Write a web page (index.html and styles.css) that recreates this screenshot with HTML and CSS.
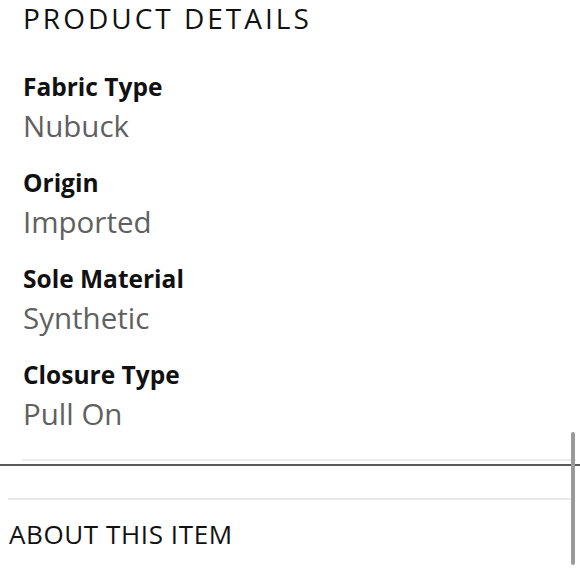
FILE: index.html
```html
<!DOCTYPE html>
<html lang="en">
<head>
<meta charset="utf-8">
<title>Product details</title>
<link rel="stylesheet" href="styles.css">
</head>
<body>
<div class="page">
  <section class="details">
    <h2 class="title">PRODUCT DETAILS</h2>
    <dl class="list">
      <div class="row"><dt class="label">Fabric Type</dt><dd class="value">Nubuck</dd></div>
      <div class="row"><dt class="label">Origin</dt><dd class="value">Imported</dd></div>
      <div class="row"><dt class="label">Sole Material</dt><dd class="value">Synthetic</dd></div>
      <div class="row"><dt class="label">Closure Type</dt><dd class="value">Pull On</dd></div>
    </dl>
  </section>
  <div class="rule-inset"></div>
  <div class="rule-dark"></div>
  <div class="rule-light"></div>
  <h2 class="about">ABOUT THIS ITEM</h2>
  <div class="scrollbar"></div>
</div>
</body>
</html>
```
FILE: styles.css
```css
html, body {
  margin: 0;
  padding: 0;
  background: #ffffff;
}
body {
  font-family: "Open Sans", "Noto Sans", "Liberation Sans", sans-serif;
  color: #111111;
}
.page {
  position: relative;
  width: 580px;
  height: 580px;
  overflow: hidden;
}
.details {
  padding: 0 0 0 23px;
}
.title {
  margin: 0;
  font-size: 28px;
  line-height: 36px;
  font-weight: 400;
  letter-spacing: 3px;
  color: #111111;
}
.list {
  margin: 36px 0 0 0;
  display: flex;
  flex-direction: column;
  gap: 24px;
}
.row {
  display: flex;
  flex-direction: column;
  gap: 6px;
}
.label {
  margin: 0;
  font-size: 24.5px;
  line-height: 30px;
  font-weight: 700;
  color: #111111;
}
.value {
  margin: 0;
  font-size: 29.5px;
  line-height: 36px;
  font-weight: 400;
  color: #5f6161;
}
.rule-inset {
  height: 2px;
  margin: 27px 4px 0 22px;
  background: #ebebeb;
}
.rule-dark {
  height: 2px;
  margin-top: 3px;
  background: #5a5a5a;
}
.rule-light {
  height: 2px;
  margin: 32px 7px 0 8px;
  background: #e9e9e9;
}
.about {
  margin: 18px 0 0 0;
  padding-left: 9px;
  font-size: 26px;
  line-height: 32px;
  font-weight: 400;
  letter-spacing: 0.6px;
  color: #111111;
}
.scrollbar {
  position: absolute;
  left: 571px;
  top: 432px;
  width: 4px;
  height: 133px;
  border-radius: 2px;
  background: #9a9a9a;
}
```
